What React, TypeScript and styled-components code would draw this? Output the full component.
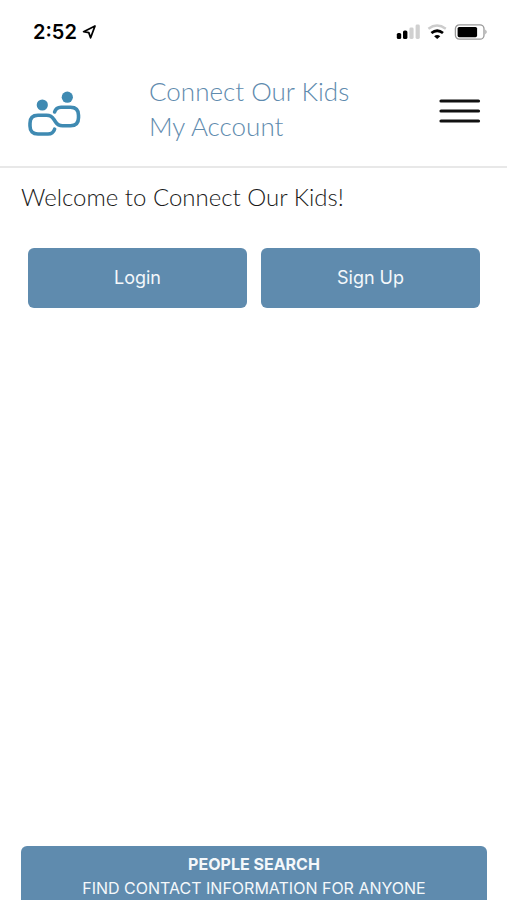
import React from "react";
import styled, { createGlobalStyle } from "styled-components";

const BLUE = "#5f8bae";

const GlobalStyle = createGlobalStyle`
  *, *::before, *::after { box-sizing: border-box; }
  body {
    margin: 0;
    background: #fff;
    color: #000;
    font-family: Inter, "Liberation Sans", sans-serif;
  }
`;

const Screen = styled.div`
  display: flex;
  flex-direction: column;
  min-height: 100vh;
`;

const StatusBar = styled.div`
  display: flex;
  align-items: center;
  justify-content: space-between;
  height: 64px;
  padding: 0 19px 0 33px;
`;

const Clock = styled.div`
  display: flex;
  align-items: center;
  gap: 5px;
  font-size: 20px;
  font-weight: 600;
  line-height: 24px;
`;

const StatusIcons = styled.div`
  display: flex;
  align-items: center;
  gap: 7px;
`;

const Icon = styled.svg`
  display: block;
  flex: none;
`;

const Header = styled.header`
  display: grid;
  grid-template-columns: 54px 1fr 42px;
  column-gap: 67px;
  align-items: center;
  height: 104px;
  padding: 0 26px 9px 28px;
  border-bottom: 2px solid #e8e8e8;
`;

const Title = styled.h1`
  margin: 0;
  padding-bottom: 3px;
  color: ${BLUE};
  font-family: Lato, "Liberation Sans", sans-serif;
  font-size: 26px;
  font-weight: 300;
  line-height: 35px;
  white-space: nowrap;
`;

const TitleLine = styled.span`
  display: block;
`;

const MenuButton = styled.button`
  display: block;
  padding: 0;
  border: 0;
  background: none;
  cursor: pointer;
`;

const Main = styled.main`
  padding: 11px 21px 24px;
`;

const Welcome = styled.p`
  margin: 0;
  color: #1a1a1a;
  font-family: Lato, "Liberation Sans", sans-serif;
  font-size: 24px;
  font-weight: 300;
  line-height: 35px;
`;

const Actions = styled.div`
  display: grid;
  grid-template-columns: 1fr 1fr;
  gap: 14px;
  padding: 34px 6px 0 7px;
`;

const ActionButton = styled.button`
  height: 60px;
  padding: 0;
  border: 0;
  border-radius: 6px;
  background: ${BLUE};
  color: #f4f8fb;
  font-family: inherit;
  font-size: 18px;
  line-height: 24px;
  cursor: pointer;
`;

const SearchBanner = styled.button`
  margin: auto 20px 0 21px;
  padding: 6px 0 0;
  border: 0;
  border-radius: 6px 6px 0 0;
  background: ${BLUE};
  color: #f4f8fb;
  font-family: inherit;
  font-size: 16px;
  line-height: 24px;
  text-align: center;
  cursor: pointer;
`;

const BannerLine = styled.span<{ $strong?: boolean }>`
  display: block;
  font-weight: ${({ $strong }) => ($strong ? 700 : 400)};
`;

const LocationIcon = () => (
  <Icon width="15" height="16" viewBox="0 0 15 16" aria-hidden="true">
    <path d="M13 2 L1.6 7.7 L6.8 8.6 L8.6 13.8 Z" fill="none" stroke="#000" strokeWidth="1.8" strokeLinejoin="round" />
  </Icon>
);

const SignalIcon = () => (
  <Icon width="24" height="16" viewBox="0 0 24 16" aria-hidden="true">
    <rect x="0.8" y="9" width="4.4" height="6" rx="1.6" />
    <rect x="7" y="6.5" width="4.4" height="8.5" rx="1.6" />
    <rect x="13.4" y="3.5" width="4.2" height="11.5" rx="1.4" fill="#d0d0d0" />
    <rect x="19.6" y="0.5" width="4.2" height="14.5" rx="1.4" fill="#d0d0d0" />
  </Icon>
);

const WifiIcon = () => (
  <Icon width="20" height="16" viewBox="0 0 20 16" fill="none" strokeWidth="2.4" aria-hidden="true">
    <path d="M1.4 4.8 Q10 -1.6 18.8 4.8" stroke="#cccccc" />
    <path d="M4.4 9 Q10.2 4.6 16 9" stroke="#000" strokeWidth="2.8" />
    <path d="M10.2 15 L7.1 12.2 Q10.2 9.8 13.3 12.2 Z" fill="#000" />
  </Icon>
);

const BatteryIcon = () => (
  <Icon width="34" height="16" viewBox="0 0 34 16" aria-hidden="true">
    <rect x="1.4" y="0.8" width="28.6" height="14.4" rx="4" fill="none" stroke="#999" strokeWidth="1.3" />
    <rect x="3.6" y="2.9" width="19.5" height="10.3" rx="1.6" />
    <path d="M31.4 5.6 Q33.8 8 31.4 10.4 Z" fill="#999" />
  </Icon>
);

const LogoIcon = () => (
  <Icon width="54" height="52" viewBox="0 -6 54 52" role="img" aria-label="Connect Our Kids">
    <g fill="#3f8ab2">
      <circle cx="14.3" cy="14" r="5.6" />
      <circle cx="39.3" cy="6.2" r="5.6" />
    </g>
    <path
      d="M26.6 38.2 Q25 43 20 43 H10 Q2 43 2 35 V32.2 Q2 24.2 10 24.2 H18.5 Q23.5 24.2 26 28.6 L27.6 31 Q30 34.8 34.5 34.8 H42.5 Q50.5 34.8 50.5 26.8 V24.2 Q50.5 16.2 42.5 16.2 H33 Q28 16.2 26.6 21"
      fill="none"
      stroke="#3f8ab2"
      strokeWidth="3.6"
      strokeLinecap="round"
    />
  </Icon>
);

const MenuIcon = () => (
  <Icon width="42" height="26" viewBox="0 0 42 26" aria-hidden="true">
    <path d="M2 3 H39.5 M2 13 H39.5 M2 23 H39.5" stroke="#111" strokeWidth="3.2" strokeLinecap="round" />
  </Icon>
);

export default function App() {
  return (
    <Screen>
      <GlobalStyle />
      <StatusBar>
        <Clock>
          2:52
          <LocationIcon />
        </Clock>
        <StatusIcons>
          <SignalIcon />
          <WifiIcon />
          <BatteryIcon />
        </StatusIcons>
      </StatusBar>
      <Header>
        <LogoIcon />
        <Title>
          <TitleLine>Connect Our Kids</TitleLine>
          <TitleLine>My Account</TitleLine>
        </Title>
        <MenuButton type="button" aria-label="Open menu">
          <MenuIcon />
        </MenuButton>
      </Header>
      <Main>
        <Welcome>Welcome to Connect Our Kids!</Welcome>
        <Actions>
          <ActionButton type="button">Login</ActionButton>
          <ActionButton type="button">Sign Up</ActionButton>
        </Actions>
      </Main>
      <SearchBanner type="button">
        <BannerLine $strong>PEOPLE SEARCH</BannerLine>
        <BannerLine>FIND CONTACT INFORMATION FOR ANYONE</BannerLine>
      </SearchBanner>
    </Screen>
  );
}
